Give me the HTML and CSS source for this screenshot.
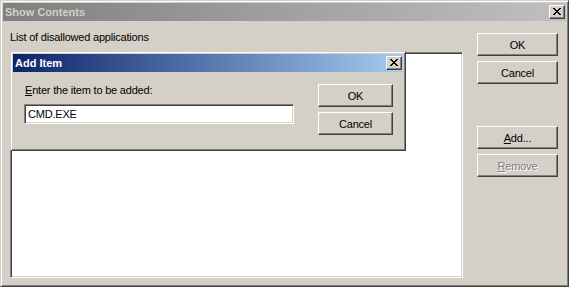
FILE: index.html
```html
<!DOCTYPE html>
<html lang="en">
<head>
  <meta charset="UTF-8" />
  <title>Show Contents</title>
  <link rel="stylesheet" href="styles.css">
</head>
<body>

  <div class="window">
    <div class="titlebar inactive">
      <span class="title">Show Contents</span>
      <span class="close">
        <svg width="8" height="7" viewBox="0 0 8 7" shape-rendering="crispEdges"><path d="M0 0h2v1H0zM6 0h2v1H6zM1 1h2v1H1zM5 1h2v1H5zM2 2h4v1H2zM3 3h2v1H3zM2 4h4v1H2zM1 5h2v1H1zM5 5h2v1H5zM0 6h2v1H0zM6 6h2v1H6z" fill="#000"/></svg>
      </span>
    </div>

    <div class="content">
      <div class="list-col">
        <div class="label">List of disallowed applications</div>
        <div class="list-area">
          <div class="listbox"></div>

          <!-- modal sits over the list -->
          <div class="dialog">
            <div class="titlebar active">
              <span class="title">Add Item</span>
              <span class="close">
                <svg width="8" height="7" viewBox="0 0 8 7" shape-rendering="crispEdges"><path d="M0 0h2v1H0zM6 0h2v1H6zM1 1h2v1H1zM5 1h2v1H5zM2 2h4v1H2zM3 3h2v1H3zM2 4h4v1H2zM1 5h2v1H1zM5 5h2v1H5zM0 6h2v1H0zM6 6h2v1H6z" fill="#000"/></svg>
              </span>
            </div>
            <div class="dialog-body">
              <div class="field">
                <div class="field-label"><u>E</u>nter the item to be added:</div>
                <div class="textbox">CMD.EXE</div>
              </div>
              <div class="dialog-buttons">
                <button class="btn small">OK</button>
                <button class="btn small">Cancel</button>
              </div>
            </div>
          </div>
        </div>
      </div>

      <div class="btn-col">
        <button class="btn">OK</button>
        <button class="btn">Cancel</button>
        <button class="btn spaced"><u>A</u>dd...</button>
        <button class="btn" disabled><u>R</u>emove</button>
      </div>
    </div>
  </div>

</body>
</html>
```

FILE: styles.css
```css
body {
  margin: 0;
  background-color: #d4d0c8;
  font-family: "Liberation Sans", Arial, sans-serif;
  font-size: 11px;
  letter-spacing: -0.2px;
  color: #000;
}

.window {
  width: 569px;
  height: 287px;
  box-sizing: border-box;
  border: 1px solid;
  border-color: #d4d0c8 #404040 #404040 #d4d0c8;
  box-shadow: inset 1px 1px #fff, inset -1px -1px #808080;
  padding: 2px;
  display: flex;
  flex-direction: column;
  background-color: #d4d0c8;
}

.titlebar {
  height: 18px;
  flex-shrink: 0;
  display: flex;
  align-items: center;
  justify-content: space-between;
  padding: 0 1px 0 2px;
}

.titlebar.inactive {
  background: linear-gradient(90deg, #808080, #c0c0c0);
  color: #d4d0c8;
}

.titlebar.active {
  background: linear-gradient(90deg, #0a246a, #a6caf0);
  color: #fff;
}

.title {
  font-weight: bold;
  line-height: 13px;
  letter-spacing: 0;
}

.close {
  width: 16px;
  height: 14px;
  box-sizing: border-box;
  background-color: #d4d0c8;
  border: 1px solid;
  border-color: #fff #404040 #404040 #fff;
  box-shadow: inset -1px -1px #808080;
  display: flex;
  padding: 2px 0 0 3px;
}

.close svg {
  display: block;
}

.content {
  flex: 1;
  display: flex;
  gap: 14px;
  padding: 10px 8px 6px 7px;
}

.list-col {
  width: 453px;
  display: flex;
  flex-direction: column;
}

.label {
  line-height: 13px;
  margin-bottom: 8px;
}

.list-area {
  flex: 1;
  position: relative;
  display: flex;
}

.listbox {
  flex: 1;
  box-sizing: border-box;
  background-color: #fff;
  border: 1px solid;
  border-color: #808080 #fff #fff #808080;
  box-shadow: inset 1px 1px #404040, inset -1px -1px #d4d0c8;
}

.dialog {
  position: absolute;
  left: 0;
  top: -1px;
  width: 396px;
  height: 100px;
  box-sizing: border-box;
  border: 1px solid;
  border-color: #d4d0c8 #404040 #404040 #d4d0c8;
  box-shadow: inset 1px 1px #fff, inset -1px -1px #808080;
  padding: 2px;
  background-color: #d4d0c8;
  display: flex;
  flex-direction: column;
}

.dialog-body {
  display: flex;
  gap: 24px;
  padding: 12px 9px 0 11px;
}

.field {
  width: 270px;
}

.field-label {
  line-height: 13px;
  padding-left: 1px;
  margin-bottom: 7px;
}

.textbox {
  height: 20px;
  box-sizing: border-box;
  background-color: #fff;
  border: 1px solid;
  border-color: #808080 #fff #fff #808080;
  box-shadow: inset 1px 1px #404040, inset -1px -1px #d4d0c8;
  padding: 0 3px;
  line-height: 18px;
}

.dialog-buttons {
  display: flex;
  flex-direction: column;
  gap: 5px;
}

.btn-col {
  display: flex;
  flex-direction: column;
  gap: 5px;
  padding-top: 2px;
}

.btn {
  width: 81px;
  height: 23px;
  box-sizing: border-box;
  padding: 0;
  font-family: inherit;
  font-size: 11px;
  letter-spacing: inherit;
  color: #000;
  background-color: #d4d0c8;
  border: 1px solid;
  border-color: #fff #404040 #404040 #fff;
  box-shadow: inset -1px -1px #808080;
  border-radius: 0;
}

.btn.small {
  width: 75px;
}

.btn.spaced {
  margin-top: 37px;
}

.btn:disabled {
  color: #808080;
  text-shadow: 1px 1px #fff;
}
```
